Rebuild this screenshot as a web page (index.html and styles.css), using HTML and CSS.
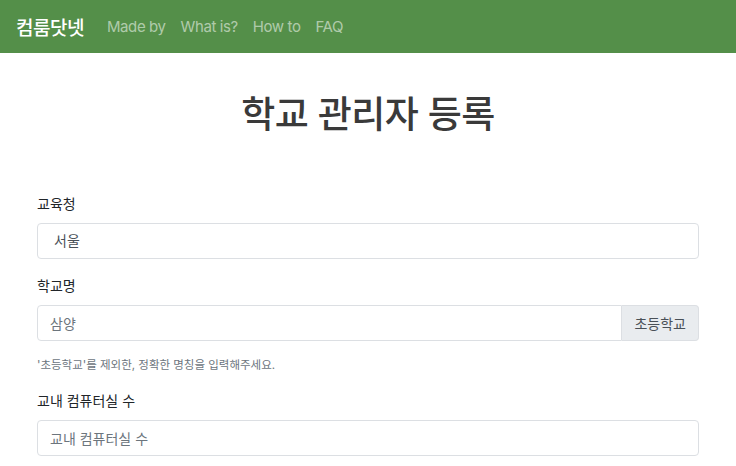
FILE: index.html
```html
<!DOCTYPE html>
<html lang="ko">

<head>
  <meta charset="UTF-8" />
  <meta name="viewport" content="width=device-width, initial-scale=1.0" />
  <title>컴룸닷넷 • 학교 관리자 등록</title>
  <link rel="stylesheet" href="styles.css">
</head>

<body>

  <nav class="navbar">
    <a href="#" class="brand">컴룸닷넷</a>
    <a href="#" class="nav-link">Made by</a>
    <a href="#" class="nav-link">What is?</a>
    <a href="#" class="nav-link">How to</a>
    <a href="#" class="nav-link">FAQ</a>
  </nav>

  <div class="container">
    <h1>학교 관리자 등록</h1>

    <form class="reg-form">
      <div class="form-group">
        <label for="office">교육청</label>
        <div class="select-box" id="office">서울</div>
      </div>

      <div class="form-group">
        <label for="school">학교명</label>
        <div class="input-group">
          <input type="text" id="school" placeholder="삼양">
          <span class="addon">초등학교</span>
        </div>
        <div class="help">'초등학교'를 제외한, 정확한 명칭을 입력해주세요.</div>
      </div>

      <div class="form-group">
        <label for="rooms">교내 컴퓨터실 수</label>
        <input type="text" id="rooms" placeholder="교내 컴퓨터실 수">
        <div class="help">컴퓨터실 수를 숫자로 정확히 입력해주세요.</div>
      </div>
    </form>
  </div>

</body>
</html>
```

FILE: styles.css
```css
* {
  box-sizing: border-box;
  font-family: Inter, 'Noto Sans CJK KR', sans-serif;
}

body {
  margin: 0;
  background: #fff;
  color: #212529;
}

.navbar {
  background: #548f49;
  height: 53px;
  padding: 0 16px;
  display: flex;
  align-items: center;
  gap: 15px;
}

.navbar a {
  text-decoration: none;
}

.brand {
  color: #fff;
  font-size: 19px;
  font-weight: 500;
  margin-right: 8px;
  letter-spacing: -0.5px;
}

.nav-link {
  color: rgba(255, 255, 255, 0.55);
  font-size: 15px;
  letter-spacing: -0.4px;
}

.container {
  padding: 0 37px 0 37px;
}

h1 {
  margin: 38px 0 55px;
  text-align: center;
  font-size: 37px;
  line-height: 48px;
  font-weight: 500;
  color: #3a3a3a;
  letter-spacing: -0.5px;
}

.form-group {
  margin-bottom: 17px;
}

label {
  display: block;
  font-size: 14px;
  line-height: 20px;
  margin-bottom: 9px;
  color: #212529;
}

.select-box,
input {
  display: block;
  width: 100%;
  height: 36px;
  border: 1px solid #dcdfe3;
  border-radius: 4px;
  font-size: 14px;
  color: #495057;
  background: #fff;
}

.select-box {
  padding: 0 16px;
  line-height: 34px;
}

input {
  padding: 0 12px;
  outline: none;
}

input::placeholder {
  color: #6c757d;
}

.input-group {
  display: flex;
}

.input-group input {
  flex: 1;
  border-radius: 4px 0 0 4px;
}

.addon {
  display: flex;
  align-items: center;
  padding: 0 12px;
  height: 36px;
  background: #e9ecef;
  border: 1px solid #dcdfe3;
  border-left: none;
  border-radius: 0 4px 4px 0;
  font-size: 14px;
  color: #495057;
}

.help {
  margin-top: 15px;
  font-size: 11.5px;
  line-height: 18px;
  color: #6c757d;
}
```
